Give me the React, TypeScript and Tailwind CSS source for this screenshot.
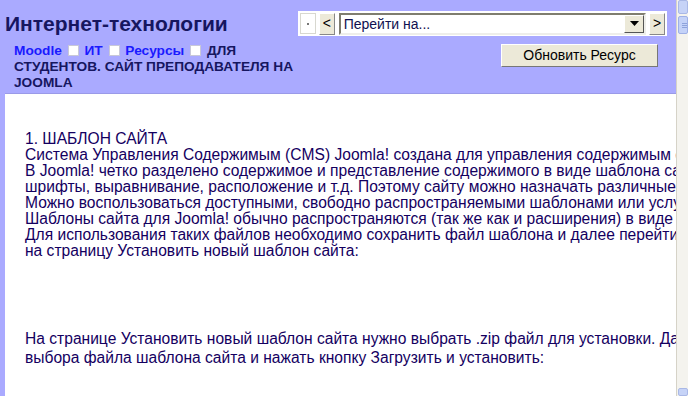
import React from "react";

const Box = () => (
  <span className="inline-block w-[11px] h-[11px] bg-white border border-[#c8c8d8] align-[-1px] mx-[2px]" />
);

export default function App() {
  const font = { fontFamily: '"Liberation Sans", Arial, sans-serif' };
  return (
    <div className="w-[688px] h-[396px] overflow-hidden flex bg-[#aaaaff]" style={font}>
      <div className="w-[676px] flex flex-col">
        {/* header */}
        <div className="h-[93px] flex shrink-0">
          <div className="w-[298px] pl-[5px]">
            <div className="text-[21px] font-bold text-[#161660] leading-[24px] pt-[12px]">Интернет-технологии</div>
            <div className="pl-[9px] pt-[7px] text-[13.7px] font-bold leading-[16px] text-[#161660] w-[300px]">
              <a className="text-[#1a1aff]">Moodle</a> <Box /> <a className="text-[#1a1aff]">ИТ</a> <Box />{" "}
              <a className="text-[#1a1aff]">Ресурсы</a> <Box /> ДЛЯ СТУДЕНТОВ. САЙТ ПРЕПОДАВАТЕЛЯ НА JOOMLA
            </div>
          </div>
          <div className="flex flex-col pt-[11px]">
            <div className="w-[369px] h-[25px] bg-white flex items-center gap-[2px] px-[2px]">
              <div className="w-[16px] h-[21px] border border-[#d8d8d0] flex items-center justify-center">
                <span className="w-[2px] h-[2px] bg-[#777]" />
              </div>
              <div className="w-[16px] h-[22px] bg-[#ece9d8] border border-white border-r-[#888] border-b-[#888] flex items-center justify-center text-[14px] text-black ml-[1px]">
                &lt;
              </div>
              <div className="w-[311px] h-[22px] border-2 border-[#7f7d6f] border-b-[#eeeeea] border-r-[#eeeeea] flex items-center ml-[2px]">
                <span className="flex-1 text-[14px] text-[#101050] pl-[3px] leading-[18px]">Перейти на...</span>
                <span className="w-[20px] h-[18px] bg-[#ece9d8] border border-white border-r-[#555] border-b-[#555] flex items-center justify-center">
                  <svg width="9" height="5" viewBox="0 0 9 5"><path d="M0 0h9L4.5 5z" fill="#000" /></svg>
                </span>
              </div>
              <div className="w-[16px] h-[22px] bg-[#ece9d8] border border-white border-r-[#888] border-b-[#888] flex items-center justify-center text-[14px] text-black ml-[1px]">
                &gt;
              </div>
            </div>
            <div className="flex justify-end pr-[9px] pt-[8px]">
              <div className="w-[157px] h-[23px] bg-[#ece9d8] border border-white border-r-[#777] border-b-[#777] flex items-center justify-center text-[14px] text-black">
                Обновить Ресурс
              </div>
            </div>
          </div>
        </div>
        {/* content */}
        <div className="flex-1 ml-[5px] bg-white border-t border-[#9a9ae8] pl-[20px] pt-[37px] text-[15.6px] leading-[16px] text-[#14005f] whitespace-nowrap overflow-hidden">
          <div>1. ШАБЛОН САЙТА</div>
          <div>Система Управления Содержимым (CMS) Joomla! создана для управления содержимым сайта.</div>
          <div>В Joomla! четко разделено содержимое и представление содержимого в виде шаблона сайта:</div>
          <div>шрифты, выравнивание, расположение и т.д. Поэтому сайту можно назначать различные шаблоны.</div>
          <div>Можно воспользоваться доступными, свободно распространяемыми шаблонами или услугами.</div>
          <div>Шаблоны сайта для Joomla! обычно распространяются (так же как и расширения) в виде архивов.</div>
          <div>Для использования таких файлов необходимо сохранить файл шаблона и далее перейти на</div>
          <div>на страницу Установить новый шаблон сайта:</div>
          <div className="h-[70px]" />
          <div className="leading-[19px]">На странице Установить новый шаблон сайта нужно выбрать .zip файл для установки. Далее</div>
          <div className="leading-[19px]">выбора файла шаблона сайта и нажать кнопку Загрузить и установить:</div>
        </div>
      </div>
      {/* scrollbar */}
      <div className="w-[12px] h-full bg-[#f4f3ee] border-l border-[#d6d3c8] flex flex-col">
        <div className="h-[14px] bg-[#c6d3f7] border border-[#a9b8e6] rounded-[2px] ml-[1px]" />
        <div className="h-[18px] mt-[2px] bg-[#c4d2f8] border border-[#9fb0e6] rounded-[2px] ml-[1px] flex flex-col justify-center gap-[1px] pl-[3px]">
          <span className="h-[1px] bg-[#8ea3db]" />
          <span className="h-[1px] bg-[#8ea3db]" />
          <span className="h-[1px] bg-[#8ea3db]" />
        </div>
        <div className="flex-1" />
        <div className="h-[8px] bg-[#c6d3f7] border border-[#a9b8e6] rounded-[2px] ml-[1px]" />
      </div>
    </div>
  );
}
